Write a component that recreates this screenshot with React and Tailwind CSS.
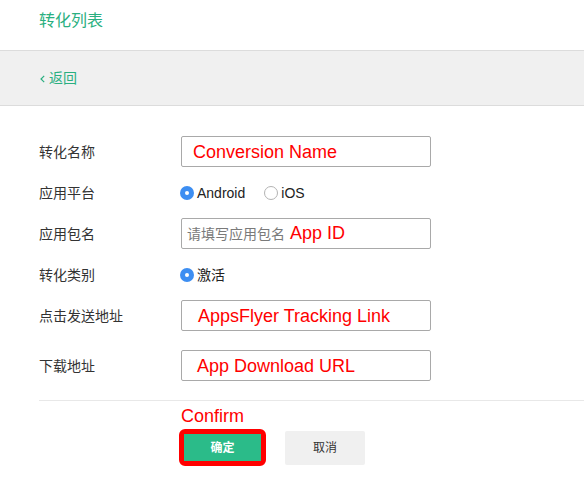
import React from 'react';

const font = { fontFamily: '"Liberation Sans", "Noto Sans CJK SC", sans-serif' };

const Label = ({ children }) => (
  <div className="w-[142px] shrink-0 text-[14px] leading-[20px] text-[#333333]">{children}</div>
);

const Radio = ({ checked, label }) => (
  <div className="flex items-center">
    {checked ? (
      <span className="flex h-[14px] w-[14px] items-center justify-center rounded-full bg-[#3d8ef2]">
        <span className="h-[4px] w-[4px] rounded-full bg-white" />
      </span>
    ) : (
      <span className="h-[14px] w-[14px] rounded-full border border-[#b3b3b3] bg-white" />
    )}
    <span className="ml-[3px] text-[14px] leading-[20px] text-[#222222]">{label}</span>
  </div>
);

const Box = ({ children, pad = 'pl-[11px]' }) => (
  <div className={`flex h-[31px] w-[250px] items-center rounded-[2px] border border-[#a9a9a9] ${pad}`}>
    {children}
  </div>
);

const Red = ({ children }) => (
  <span className="text-[18px] leading-[22px] text-[#ff0000]">{children}</span>
);

export default function App() {
  return (
    <div className="h-[493px] w-[584px] overflow-hidden bg-white" style={font}>
      {/* header */}
      <div className="h-[50px] pl-[39px] pt-[10px]">
        <div className="text-[16px] leading-[21px] text-[#2aaf80]">转化列表</div>
      </div>

      {/* back bar */}
      <div className="flex h-[56px] items-center border-y border-[#dcdcdc] bg-[#f0f0f0] pl-[40px]">
        <svg width="5" height="8" viewBox="0 0 5 8" className="mt-[1px]">
          <path d="M4.2 0.8 L1 4 L4.2 7.2" fill="none" stroke="#2aaf80" strokeWidth="1.2" />
        </svg>
        <span className="ml-[4px] text-[14px] leading-[20px] text-[#2aaf80]">返回</span>
      </div>

      {/* form */}
      <div className="pl-[39px] pt-[30px]">
        <div className="flex flex-col gap-[10px]">
          <div className="flex h-[31px] items-center">
            <Label>转化名称</Label>
            <Box>
              <Red>Conversion Name</Red>
            </Box>
          </div>
          <div className="flex h-[31px] items-center">
            <Label>应用平台</Label>
            <div className="-ml-[1px] flex items-center gap-[19px]">
              <Radio checked label="Android" />
              <Radio label="iOS" />
            </div>
          </div>
          <div className="flex h-[31px] items-center">
            <Label>应用包名</Label>
            <Box pad="pl-[5px]">
              <span className="text-[14px] leading-[20px] text-[#7a7a7a]">请填写应用包名</span>
              <span className="ml-[5px]">
                <Red>App ID</Red>
              </span>
            </Box>
          </div>
          <div className="flex h-[31px] items-center">
            <Label>转化类别</Label>
            <div className="-ml-[1px]">
              <Radio checked label="激活" />
            </div>
          </div>
          <div className="flex h-[31px] items-center">
            <Label>点击发送地址</Label>
            <Box pad="pl-[16px]">
              <Red>AppsFlyer Tracking Link</Red>
            </Box>
          </div>
          <div className="mt-[9px] flex h-[31px] items-center">
            <Label>下载地址</Label>
            <Box pad="pl-[15px]">
              <Red>App Download URL</Red>
            </Box>
          </div>
        </div>

        <div className="mt-[19px] h-px bg-[#e8e8e8]" />

        <div className="pl-[142px]">
          <div className="mt-[4px] text-[18px] leading-[22px] text-[#ff0000]">Confirm</div>
          <div className="mt-[2px] flex items-center">
            <div className="-ml-[2px] h-[37px] w-[87px] rounded-[6px] border-[5px] border-[#ff0000]">
              <div className="flex h-full w-full items-center justify-center bg-[#2bbb89] text-[12px] font-bold text-white">
                确定
              </div>
            </div>
            <button className="ml-[19px] flex h-[34px] w-[80px] items-center justify-center rounded-[2px] bg-[#f0f0f0] text-[12px] text-[#333333]">
              取消
            </button>
          </div>
        </div>
      </div>
    </div>
  );
}
